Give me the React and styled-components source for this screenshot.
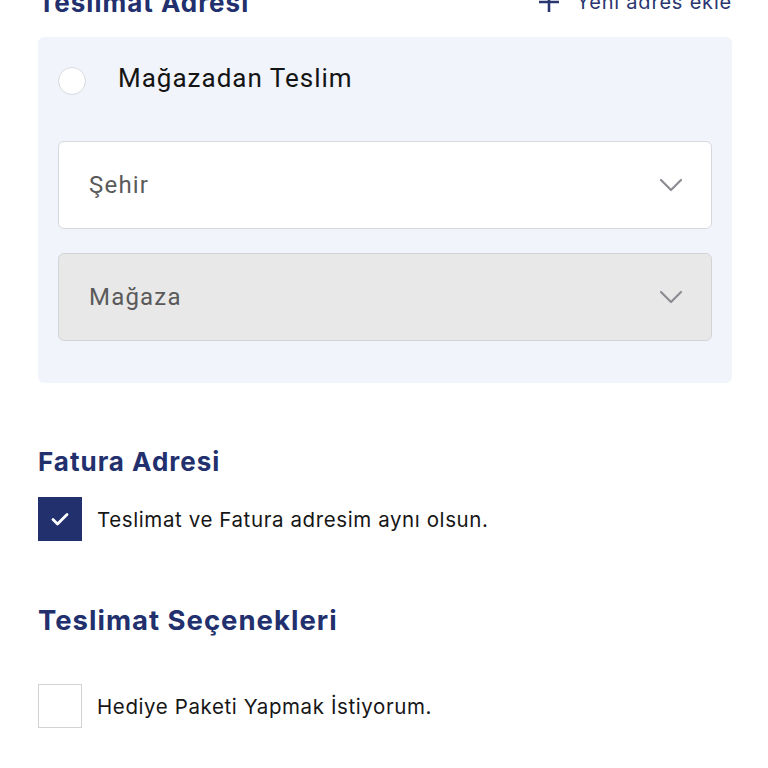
import React, { useState } from 'react'
import styled, { createGlobalStyle } from 'styled-components'

const GlobalStyle = createGlobalStyle`
  html, body {
    margin: 0;
    padding: 0;
    background: #ffffff;
    overflow: hidden;
  }
  body {
    font-family: "Inter", "Roboto", sans-serif;
  }
`

const Page = styled.div`
  width: 768px;
  height: 768px;
  box-sizing: border-box;
  padding: 0 36px 0 38px;
  overflow: hidden;
`

const SectionHead = styled.div`
  display: flex;
  justify-content: space-between;
  align-items: center;
  margin-top: -22px;
  height: 48px;
`

const Title = styled.h2`
  margin: 0;
  font-family: "Inter", sans-serif;
  font-weight: 700;
  font-size: ${(p) => p.size || 26}px;
  color: #22306e;
  letter-spacing: 1px;
`

const AddLink = styled.button`
  display: flex;
  align-items: center;
  gap: 16px;
  border: 0;
  background: none;
  padding: 0;
  font-family: "Inter", sans-serif;
  font-size: 20px;
  letter-spacing: 0.8px;
  color: #2a3670;
  cursor: pointer;
`

const Panel = styled.div`
  margin-top: 11px;
  background: #f1f4fb;
  border-radius: 6px;
  padding: 22px 20px 42px 20px;
`

const RadioRow = styled.label`
  display: flex;
  align-items: center;
  gap: 32px;
  height: 40px;
  margin-bottom: 42px;
`

const Radio = styled.span`
  width: 28px;
  height: 28px;
  border-radius: 50%;
  background: #fff;
  border: 1px solid #d8d9de;
  box-sizing: border-box;
  margin-top: 3px;
`

const RadioText = styled.span`
  font-family: "Roboto", sans-serif;
  font-size: 26px;
  letter-spacing: 1px;
  color: #141414;
  margin-top: -3px;
`

const Select = styled.div`
  display: flex;
  align-items: center;
  justify-content: space-between;
  height: 88px;
  box-sizing: border-box;
  padding: 0 28px 0 30px;
  border: 1px solid ${(p) => (p.disabled ? '#d3d4d8' : '#d6d8de')};
  border-radius: 6px;
  background: ${(p) => (p.disabled ? '#e8e8e8' : '#ffffff')};
  & + & {
    margin-top: 24px;
  }
`

const SelectText = styled.span`
  font-family: "Roboto", sans-serif;
  font-size: 24px;
  letter-spacing: 1.2px;
  color: #5a5a5a;
`

const Section = styled.div`
  margin-top: ${(p) => p.top}px;
`

const CheckRow = styled.label`
  display: flex;
  align-items: center;
  gap: 15px;
  margin-top: ${(p) => p.top}px;
`

const Box = styled.span`
  width: 44px;
  height: 44px;
  box-sizing: border-box;
  display: flex;
  align-items: center;
  justify-content: center;
  background: ${(p) => (p.checked ? '#22306e' : '#ffffff')};
  border: 1px solid ${(p) => (p.checked ? '#22306e' : '#d2d2d2')};
`

const CheckText = styled.span`
  font-family: "Inter", sans-serif;
  font-size: 20.5px;
  letter-spacing: 0.6px;
  color: #161616;
`

function Chevron() {
  return (
    <svg width="24" height="14" viewBox="0 0 24 14" fill="none">
      <path d="M2 2l10 10L22 2" stroke="#8c8d93" strokeWidth="2.2" strokeLinecap="round" strokeLinejoin="round" />
    </svg>
  )
}

function Plus() {
  return (
    <svg width="22" height="22" viewBox="0 0 22 22" fill="none">
      <path d="M11 1v20M1 11h20" stroke="#2a3670" strokeWidth="2.6" />
    </svg>
  )
}

export default function App() {
  const [same, setSame] = useState(true)
  const [gift, setGift] = useState(false)

  return (
    <>
      <GlobalStyle />
      <Page>
        <SectionHead>
          <Title>Teslimat Adresi</Title>
          <AddLink>
            <Plus />
            Yeni adres ekle
          </AddLink>
        </SectionHead>
        <Panel>
          <RadioRow>
            <Radio />
            <RadioText>Mağazadan Teslim</RadioText>
          </RadioRow>
          <Select>
            <SelectText>Şehir</SelectText>
            <Chevron />
          </Select>
          <Select disabled>
            <SelectText>Mağaza</SelectText>
            <Chevron />
          </Select>
        </Panel>

        <Section top={63}>
          <Title>Fatura Adresi</Title>
          <CheckRow top={20} onClick={() => setSame(!same)}>
            <Box checked={same}>
              {same && (
                <svg width="18" height="14" viewBox="0 0 18 14" fill="none">
                  <path d="M2 7.5l4.5 4.5L16 2.5" stroke="#fff" strokeWidth="2.8" strokeLinecap="round" strokeLinejoin="round" />
                </svg>
              )}
            </Box>
            <CheckText>Teslimat ve Fatura adresim aynı olsun.</CheckText>
          </CheckRow>
        </Section>

        <Section top={62}>
          <Title size={27.5}>Teslimat Seçenekleri</Title>
          <CheckRow top={47} onClick={() => setGift(!gift)}>
            <Box checked={gift} />
            <CheckText>Hediye Paketi Yapmak İstiyorum.</CheckText>
          </CheckRow>
        </Section>
      </Page>
    </>
  )
}
